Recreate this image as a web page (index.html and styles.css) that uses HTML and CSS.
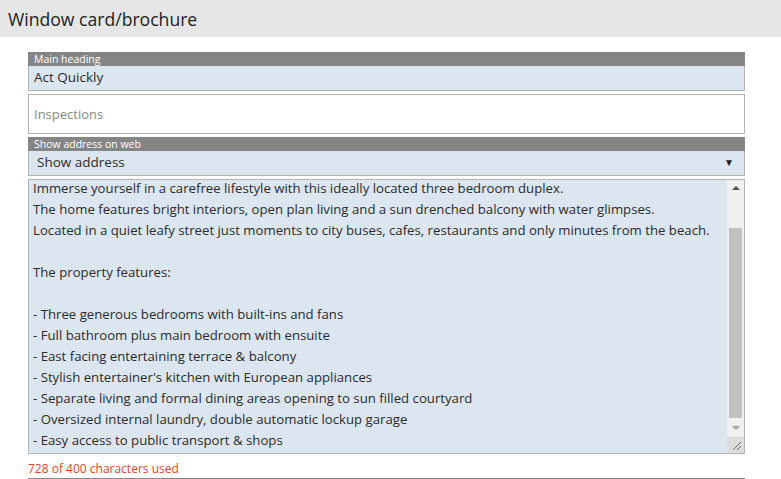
FILE: index.html
```html
<!DOCTYPE html>
<html>
<head>
<meta charset="utf-8">
<link rel="stylesheet" href="styles.css">
</head>
<body>
<header class="topbar"><h1 class="title">Window card/brochure</h1></header>
<main class="form">
  <div class="field">
    <div class="label">Main heading</div>
    <div class="input filled">Act Quickly</div>
  </div>
  <div class="input plain">Inspections</div>
  <div class="field">
    <div class="label">Show address on web</div>
    <div class="input filled select"><span>Show address</span><span class="arrow">▼</span></div>
  </div>
  <div class="textarea">
    <div class="text">Immerse yourself in a carefree lifestyle with this ideally located three bedroom duplex.
The home features bright interiors, open plan living and a sun drenched balcony with water glimpses.
Located in a quiet leafy street just moments to city buses, cafes, restaurants and only minutes from the beach.

The property features:

- Three generous bedrooms with built-ins and fans
- Full bathroom plus main bedroom with ensuite
- East facing entertaining terrace &amp; balcony
- Stylish entertainer's kitchen with European appliances
- Separate living and formal dining areas opening to sun filled courtyard
- Oversized internal laundry, double automatic lockup garage
- Easy access to public transport &amp; shops</div>
    <div class="scrollbar">
      <div class="sb-btn"><span class="tri up"></span></div>
      <div class="sb-track"><div class="sb-thumb"></div></div>
      <div class="sb-btn"><span class="tri down"></span></div>
      <div class="sb-corner">
        <svg width="11" height="11" viewBox="0 0 11 11"><path d="M10 2 L2 10 M10 6 L6 10" stroke="#666" stroke-width="1" fill="none"/></svg>
      </div>
    </div>
  </div>
  <div class="count">728 of 400 characters used</div>
  <div class="rule"></div>
</main>
</body>
</html>
```
FILE: styles.css
```css
* { box-sizing: border-box; }
html, body { margin: 0; padding: 0; background: #fff; }
body { font-family: "Open Sans", "Noto Sans", sans-serif; color: #333; width: 781px; height: 479px; overflow: hidden; }
.topbar { background: #e6e6e6; height: 37px; display: flex; align-items: center; padding-left: 8px; }
.title { margin: 0; font-size: 17.6px; font-weight: 400; color: #222; }
.form { margin: 15px 36px 0 28px; display: flex; flex-direction: column; }
.field { display: flex; flex-direction: column; }
.label { background: #858585; color: #fff; font-size: 10.5px; height: 14px; line-height: 14px; padding-left: 6px; }
.input { border: 1px solid #b4b4b4; font-size: 13.5px; }
.filled { background: #dce6f0; border-top: none; height: 25px; line-height: 23px; padding-left: 5px; color: #2b2b2b; }
.plain { margin: 3px 0; height: 40px; line-height: 38px; padding-left: 5px; color: #888; background: #fff; font-size: 13px; }
.select { display: flex; justify-content: space-between; padding-left: 8px; padding-right: 10px; }
.arrow { font-size: 10px; color: #222; }
.textarea { margin-top: 3px; height: 275px; border: 1px solid #b4b4b4; background: #dce6f0; display: flex; overflow: hidden; }
.text { flex: 1; white-space: pre; font-size: 13.2px; line-height: 21px; padding: 0 0 0 4px; margin-top: -2px; color: #2b2b2b; }
.scrollbar { width: 17px; display: flex; flex-direction: column; background: #f0f0f0; }
.sb-btn { height: 17px; display: flex; align-items: center; justify-content: center; }
.tri { width: 0; height: 0; border-left: 4px solid transparent; border-right: 4px solid transparent; }
.tri.up { border-bottom: 4px solid #505050; }
.tri.down { border-top: 4px solid #a3a3a3; }
.sb-track { flex: 1; padding: 32px 2px 2px 2px; display: flex; flex-direction: column; }
.sb-thumb { height: 190px; background: #c1c1c1; }
.sb-corner { height: 17px; background: #dcdcdc; display: flex; align-items: flex-end; justify-content: flex-end; padding: 0 2px 2px 0; }
.count { color: #e0472c; font-size: 12px; margin-top: 5px; height: 19px; line-height: 19px; }
.rule { height: 1px; background: #888; }
```
